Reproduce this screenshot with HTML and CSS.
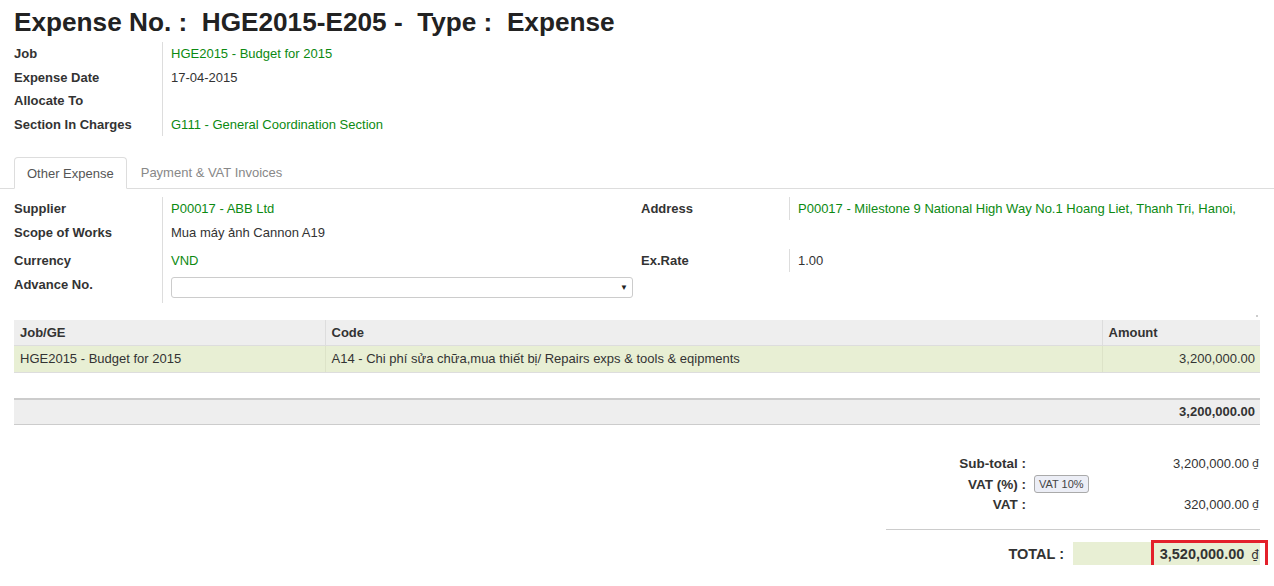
FILE: index.html
```html
<!DOCTYPE html>
<html>
<head>
<meta charset="utf-8">
<link rel="stylesheet" href="styles.css">
</head>
<body>
<div class="page">
  <h1 class="title">Expense No. :&nbsp; HGE2015-E205 -&nbsp; Type :&nbsp; Expense</h1>

  <div class="info">
    <div class="lbl">Job</div><div class="val green">HGE2015 - Budget for 2015</div>
    <div class="lbl">Expense Date</div><div class="val">17-04-2015</div>
    <div class="lbl">Allocate To</div><div class="val"></div>
    <div class="lbl">Section In Charges</div><div class="val green">G111 - General Coordination Section</div>
  </div>
</div>

<div class="tabs">
  <div class="tab active">Other Expense</div>
  <div class="tab">Payment &amp; VAT Invoices</div>
</div>

<div class="page">
  <div class="form">
    <div class="lbl r1">Supplier</div><div class="val lv r1 green">P00017 - ABB Ltd</div>
    <div class="lbl r1 rl">Address</div><div class="val rv r1 green">P00017 - Milestone 9 National High Way No.1 Hoang Liet, Thanh Tri, Hanoi,</div>

    <div class="lbl r2">Scope of Works</div><div class="val lv r2">Mua máy ảnh Cannon A19</div>
    <div class="lbl r2 rl"></div><div class="val r2 empty"></div>

    <div class="lbl r3">Currency</div><div class="val lv r3 green">VND</div>
    <div class="lbl r3 rl">Ex.Rate</div><div class="val rv r3">1.00</div>

    <div class="lbl r4">Advance No.</div>
    <div class="val lv r4"><div class="select"><span class="arrow">&#9660;</span></div></div>
    <div class="lbl r4 rl"></div><div class="val r4 empty"></div>
  </div>

  <div class="tablewrap">
    <div class="dot"></div>
    <table class="lines">
      <thead>
        <tr><th class="c1">Job/GE</th><th class="c2">Code</th><th class="c3">Amount</th></tr>
      </thead>
      <tbody>
        <tr><td>HGE2015 - Budget for 2015</td><td>A14 - Chi phí sửa chữa,mua thiết bị/ Repairs exps &amp; tools &amp; eqipments</td><td class="num">3,200,000.00</td></tr>
      </tbody>
    </table>
  </div>

  <div class="sumrow">3,200,000.00</div>

  <div class="totals">
    <div class="tl">Sub-total :</div><div class="tv">3,200,000.00 <span class="cur">₫</span></div>
    <div class="tl">VAT (%) :</div><div class="tv left"><span class="badge">VAT 10%</span></div>
    <div class="tl">VAT :</div><div class="tv">320,000.00 <span class="cur">₫</span></div>
  </div>
  <div class="grand">
    <div class="gl">TOTAL :</div>
    <div class="gv"><span class="amt">3,520,000.00 <span class="cur">₫</span></span><span class="hl"></span></div>
  </div>
</div>
</body>
</html>
```

FILE: styles.css
```css
* { box-sizing: border-box; }
html, body { margin: 0; padding: 0; background: #fff; }
body {
  font-family: "Liberation Sans", Arial, sans-serif;
  font-size: 13px;
  color: #333;
  padding-top: 7px;
}
.page { padding: 0 14px; }

.title {
  margin: 0;
  font-size: 26.2px;
  line-height: 30px;
  font-weight: bold;
  color: #222;
  white-space: nowrap;
}

.green { color: #0c8a12; }

.info {
  display: grid;
  grid-template-columns: 148px 1fr;
  grid-auto-rows: 23.5px;
  margin-top: 5px;
}
.lbl { font-weight: bold; color: #333; display: flex; align-items: center; }
.val { display: flex; align-items: center; }
.info .val { border-left: 1px solid #ddd; padding-left: 8px; }

.tabs {
  margin-top: 21px;
  display: flex;
  padding-left: 14px;
  border-bottom: 1px solid #ddd;
  height: 32px;
}
.tab {
  height: 31px;
  padding: 0 13px;
  display: flex;
  align-items: center;
  color: #888;
  border: 1px solid transparent;
  border-radius: 4px 4px 0 0;
}
.tab.active {
  color: #555;
  background: #fff;
  border-color: #ddd;
  border-bottom-color: #fff;
  height: 32px;
  padding: 0 12px;
}

.form {
  display: grid;
  grid-template-columns: 148px 479px 148px 1fr;
  grid-template-rows: 23px 24px 28px 31px;
  margin-top: 8px;
}
.form .lv { border-left: 1px solid #ddd; padding-left: 8px; padding-right: 8px; }
.form .rv { border-left: 1px solid #ddd; padding-left: 8px; }
.form .r1, .form .r2 { align-items: center; }
.form .r3 { align-items: center; padding-top: 4px; }
.form .r3.rv { margin-top: 5px; padding-top: 0; }
.form .r4 { align-items: flex-start; padding-top: 5px; }

.select {
  width: 462px;
  height: 21px;
  border: 1px solid #ccc;
  border-radius: 3px;
  background: #fff;
  display: flex;
  align-items: center;
  justify-content: flex-end;
  padding-right: 4px;
}
.arrow { font-size: 8px; color: #222; }

.tablewrap { position: relative; margin-top: 17px; }
.dot {
  position: absolute;
  right: 2px;
  top: -5px;
  width: 2px; height: 2px;
  background: #ccc;
}

.lines {
  width: 1246px;
  border-collapse: collapse;
  table-layout: fixed;
}
.lines th {
  background: #eee;
  text-align: left;
  font-weight: bold;
  height: 25px;
  padding: 0 6px;
  border-left: 1px solid #ddd;
  border-bottom: 1px solid #ddd;
}
.lines th:first-child, .lines td:first-child { border-left: none; }
.lines .c1 { width: 311px; }
.lines .c2 { width: 777px; }
.lines .c3 { width: 158px; }
.lines td {
  background: #e8efd4;
  height: 27px;
  padding: 0 6px;
  border-left: 1px solid #dde3c8;
  border-bottom: 1px solid #ddd;
  white-space: nowrap;
}
.lines td.num { text-align: right; padding-right: 5px; }

.sumrow {
  margin-top: 25px;
  width: 1246px;
  height: 27px;
  background: #eee;
  border-top: 2px solid #ccc;
  border-bottom: 1px solid #ccc;
  text-align: right;
  font-weight: bold;
  padding-right: 5px;
  line-height: 24px;
}

.totals {
  margin-top: 29px;
  margin-left: 872px;
  width: 374px;
  display: grid;
  grid-template-columns: 140px 1fr;
  grid-auto-rows: 20.5px;
  padding-bottom: 14px;
  border-bottom: 1px solid #ccc;
}
.tl { font-weight: bold; font-size: 13.5px; display: flex; align-items: center; justify-content: flex-end; }
.tv { display: flex; align-items: center; justify-content: flex-end; padding-right: 1px; }
.tv.left { justify-content: flex-start; padding-left: 8px; }
.cur { margin-left: 3px; font-family: "DejaVu Sans", sans-serif; font-size: 11px; }
.badge {
  display: inline-block;
  font-size: 11px;
  line-height: 16px;
  padding: 0 4px;
  border: 1px solid #aaa;
  border-radius: 3px;
  background: #eceef6;
  color: #444;
}

.grand {
  margin-left: 872px;
  width: 374px;
  display: flex;
  margin-top: 12px;
  height: 23px;
}
.gl {
  width: 187px;
  font-weight: bold;
  font-size: 14.5px;
  display: flex;
  align-items: center;
  justify-content: flex-end;
  padding-right: 9px;
}
.gv {
  flex: 1;
  background: #e8efd4;
  position: relative;
  display: flex;
  align-items: center;
  justify-content: flex-end;
  font-weight: bold;
  font-size: 14.5px;
  padding-right: 1px;
}
.gv .cur { font-size: 12px; font-weight: normal; }
.hl {
  position: absolute;
  left: 78px;
  right: -8px;
  top: -2px;
  bottom: -3px;
  border: 3px solid #e3202b;
}
```
